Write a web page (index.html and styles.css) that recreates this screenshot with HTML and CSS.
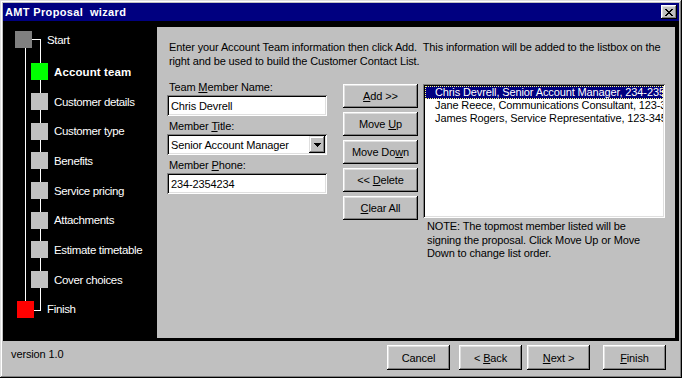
FILE: index.html
```html
<!DOCTYPE html>
<html>
	<head>
		<title>AMT Proposal wizard</title>
		<link rel="stylesheet" href="styles.css">
	</head>
	<body>
		<div class="window">
			<div class="titlebar">
				<span class="title">AMT Proposal  wizard</span>
				<span class="close">
					<svg width="8" height="7" viewBox="0 0 8 7" shape-rendering="crispEdges"><path d="M0 0h2v1h1v1h2V1h1V0h2v1H7v1H6v1H5v1h1v1h1v1h1v1H6V6H5V5H3v1H2v1H0V6h1V5h1V4h1V3H2V2H1V1H0z" fill="#000"/></svg>
				</span>
			</div>
			<div class="content">
				<div class="sidebar">
					<!-- connector lines of the step tree -->
					<svg class="tree" width="155" height="320" shape-rendering="crispEdges">
						<g stroke="#fff" stroke-width="1">
							<line x1="29" y1="18.5" x2="38" y2="18.5"/>
							<line x1="37.5" y1="18" x2="37.5" y2="290"/>
							<line x1="22.5" y1="26" x2="22.5" y2="281"/>
							<line x1="31" y1="289.5" x2="38" y2="289.5"/>
						</g>
					</svg>
					<ul class="steps">
						<li class="step first"><span class="box grey"></span>Start</li>
						<li class="step current"><span class="box green"></span>Account team</li>
						<li class="step"><span class="box"></span>Customer details</li>
						<li class="step"><span class="box"></span>Customer type</li>
						<li class="step"><span class="box"></span>Benefits</li>
						<li class="step"><span class="box"></span>Service pricing</li>
						<li class="step"><span class="box"></span>Attachments</li>
						<li class="step"><span class="box"></span>Estimate timetable</li>
						<li class="step"><span class="box"></span>Cover choices</li>
						<li class="step last"><span class="box red"></span>Finish</li>
					</ul>
				</div>
				<div class="panel">
					<p class="intro">Enter your Account Team information then click Add.&nbsp; This information will be added to the listbox on the<br>right and be used to build the Customer Contact List.</p>
					<div class="team">
						<div class="fields">
							<label>Team <u>M</u>ember Name:</label>
							<div class="field">Chris Devrell</div>
							<label>Member <u>T</u>itle:</label>
							<div class="field combo">
								<span class="value">Senior Account Manager</span>
								<span class="drop"><svg width="7" height="4" viewBox="0 0 7 4" shape-rendering="crispEdges"><path d="M0 0h7v1H6v1H5v1H4v1H3V3H2V2H1V1H0z" fill="#000"/></svg></span>
							</div>
							<label>Member <u>P</u>hone:</label>
							<div class="field">234-2354234</div>
						</div>
						<div class="actions">
							<button class="btn"><u>A</u>dd &gt;&gt;</button>
							<button class="btn">Move <u>U</u>p</button>
							<button class="btn">Move Do<u>w</u>n</button>
							<button class="btn">&lt;&lt; <u>D</u>elete</button>
							<button class="btn"><u>C</u>lear All</button>
						</div>
						<div class="members">
							<ul class="listbox">
								<li class="selected">Chris Devrell, Senior Account Manager, 234-2354234</li>
								<li>Jane Reece, Communications Consultant, 123-3456789</li>
								<li>James Rogers, Service Representative, 123-3456789</li>
							</ul>
							<p class="note">NOTE: The topmost member listed will be<br>signing the proposal. Click Move Up or Move<br>Down to change list order.</p>
						</div>
					</div>
				</div>
			</div>
			<div class="footer">
				<span class="version">version 1.0</span>
				<div class="nav">
					<button class="btn wide" id="cancel">Cancel</button>
					<button class="btn wide" id="back">&lt; <u>B</u>ack</button>
					<button class="btn wide" id="next"><u>N</u>ext &gt;</button>
					<button class="btn wide" id="finish"><u>F</u>inish</button>
				</div>
			</div>
		</div>
	</body>
</html>
```

FILE: styles.css
```css
* {
	box-sizing: border-box;
}
body {
	margin: 0;
	background-color: #c0c0c0;
	font-family: "Liberation Sans", Arial, sans-serif;
	font-size: 11px;
	letter-spacing: -0.12px;
	color: #000;
}
u {
	text-decoration: underline;
}
.window {
	width: 682px;
	height: 378px;
	padding: 3px;
	display: flex;
	flex-direction: column;
	background-color: #c0c0c0;
	box-shadow: inset -1px -1px #000, inset 1px 1px #dfdfdf, inset -2px -2px #808080, inset 2px 2px #fff;
}
.titlebar {
	height: 18px;
	padding: 0 2px;
	display: flex;
	align-items: center;
	justify-content: space-between;
	background-color: #000080;
	color: #fff;
}
	.title {
		font-weight: bold;
		letter-spacing: 0.35px;
		white-space: pre;
	}
	.close {
		width: 16px;
		height: 14px;
		display: flex;
		align-items: center;
		justify-content: center;
		background-color: #c0c0c0;
		box-shadow: inset -1px -1px #000, inset 1px 1px #fff, inset -2px -2px #808080, inset 2px 2px #dfdfdf;
	}
.content {
	height: 320px;
	display: flex;
	background-color: #000;
}
.sidebar {
	width: 155px;
	position: relative;
	padding-top: 4px;
	color: #fff;
}
	.tree {
		position: absolute;
		left: 0;
		top: 0;
	}
	.steps {
		position: relative;
		list-style-type: none;
		margin: 0;
		padding: 0;
	}
		.step {
			height: 29.7px;
			display: flex;
			align-items: center;
			padding-left: 28px;
			font-size: 11.5px;
			letter-spacing: -0.35px;
		}
		.step .box {
			width: 17px;
			height: 17px;
			margin-right: 6px;
			background-color: #c0c0c0;
		}
		.step.first {
			padding-left: 12px;
			margin-bottom: 2.3px;
		}
		.step.first .box {
			margin-right: 15px;
		}
		.step.last {
			padding-left: 14px;
		}
		.step.last .box {
			margin-right: 13px;
		}
		.step.current {
			font-weight: bold;
			letter-spacing: 0.1px;
		}
		.box.grey {
			background-color: #808080 !important;
		}
		.box.green {
			background-color: #00ff00 !important;
		}
		.box.red {
			background-color: #ff0000 !important;
		}
.panel {
	flex: 1;
	margin: 6px 4px 3px 0;
	padding: 13px 10px 0 10px;
	background-color: #c0c0c0;
}
	.intro {
		margin: 0 0 12px 2px;
		line-height: 14px;
		white-space: nowrap;
	}
	.team {
		display: flex;
	}
	.fields {
		width: 160px;
	}
		.fields label {
			display: block;
			height: 14px;
			line-height: 14px;
			margin-bottom: 1px;
			padding-left: 2px;
		}
		.field {
			height: 21px;
			margin-bottom: 3px;
			padding: 0 4px;
			display: flex;
			align-items: center;
			background-color: #fff;
			box-shadow: inset 1px 1px #808080, inset -1px -1px #fff, inset 2px 2px #000, inset -2px -2px #dfdfdf;
			white-space: nowrap;
		}
		.combo {
			padding-right: 2px;
		}
			.combo .value {
				flex: 1;
			}
			.drop {
				width: 16px;
				height: 17px;
				display: flex;
				align-items: center;
				justify-content: center;
				background-color: #c0c0c0;
				box-shadow: inset -1px -1px #000, inset 1px 1px #dfdfdf, inset -2px -2px #808080, inset 2px 2px #fff;
			}
	.actions {
		width: 75px;
		margin: 4px 0 0 16px;
		display: flex;
		flex-direction: column;
		gap: 4px;
	}
	.btn {
		width: 75px;
		height: 24px;
		padding: 0;
		border: none;
		background-color: #c0c0c0;
		color: #000;
		font-family: inherit;
		font-size: 11px;
		letter-spacing: -0.12px;
		box-shadow: inset -1px -1px #000, inset 1px 1px #fff, inset -2px -2px #808080, inset 2px 2px #dfdfdf;
	}
	.members {
		margin: 4px 0 0 5px;
	}
		.listbox {
			width: 242px;
			height: 134px;
			margin: 0;
			padding: 2px;
			list-style-type: none;
			overflow: hidden;
			background-color: #fff;
			box-shadow: inset 1px 1px #808080, inset -1px -1px #fff, inset 2px 2px #000, inset -2px -2px #dfdfdf;
		}
			.listbox li {
				height: 13px;
				line-height: 13px;
				padding-left: 10px;
				white-space: nowrap;
				overflow: hidden;
			}
			.listbox li.selected {
				background-color: #000080;
				color: #fff;
				outline: 1px dotted #ffff80;
				outline-offset: -1px;
			}
		.note {
			margin: 2px 0 0 4px;
			line-height: 13.5px;
			white-space: nowrap;
		}
.footer {
	flex: 1;
	display: flex;
	align-items: flex-start;
	justify-content: space-between;
	padding: 4px 13px 0 8px;
}
	.version {
		margin-top: 2px;
		line-height: 14px;
	}
	.nav {
		display: flex;
	}
		.btn.wide {
			width: 63px;
			height: 25px;
		}
		#back {
			margin-left: 9px;
		}
		#next {
			margin-left: 5px;
		}
		#finish {
			margin-left: 13px;
		}
```
